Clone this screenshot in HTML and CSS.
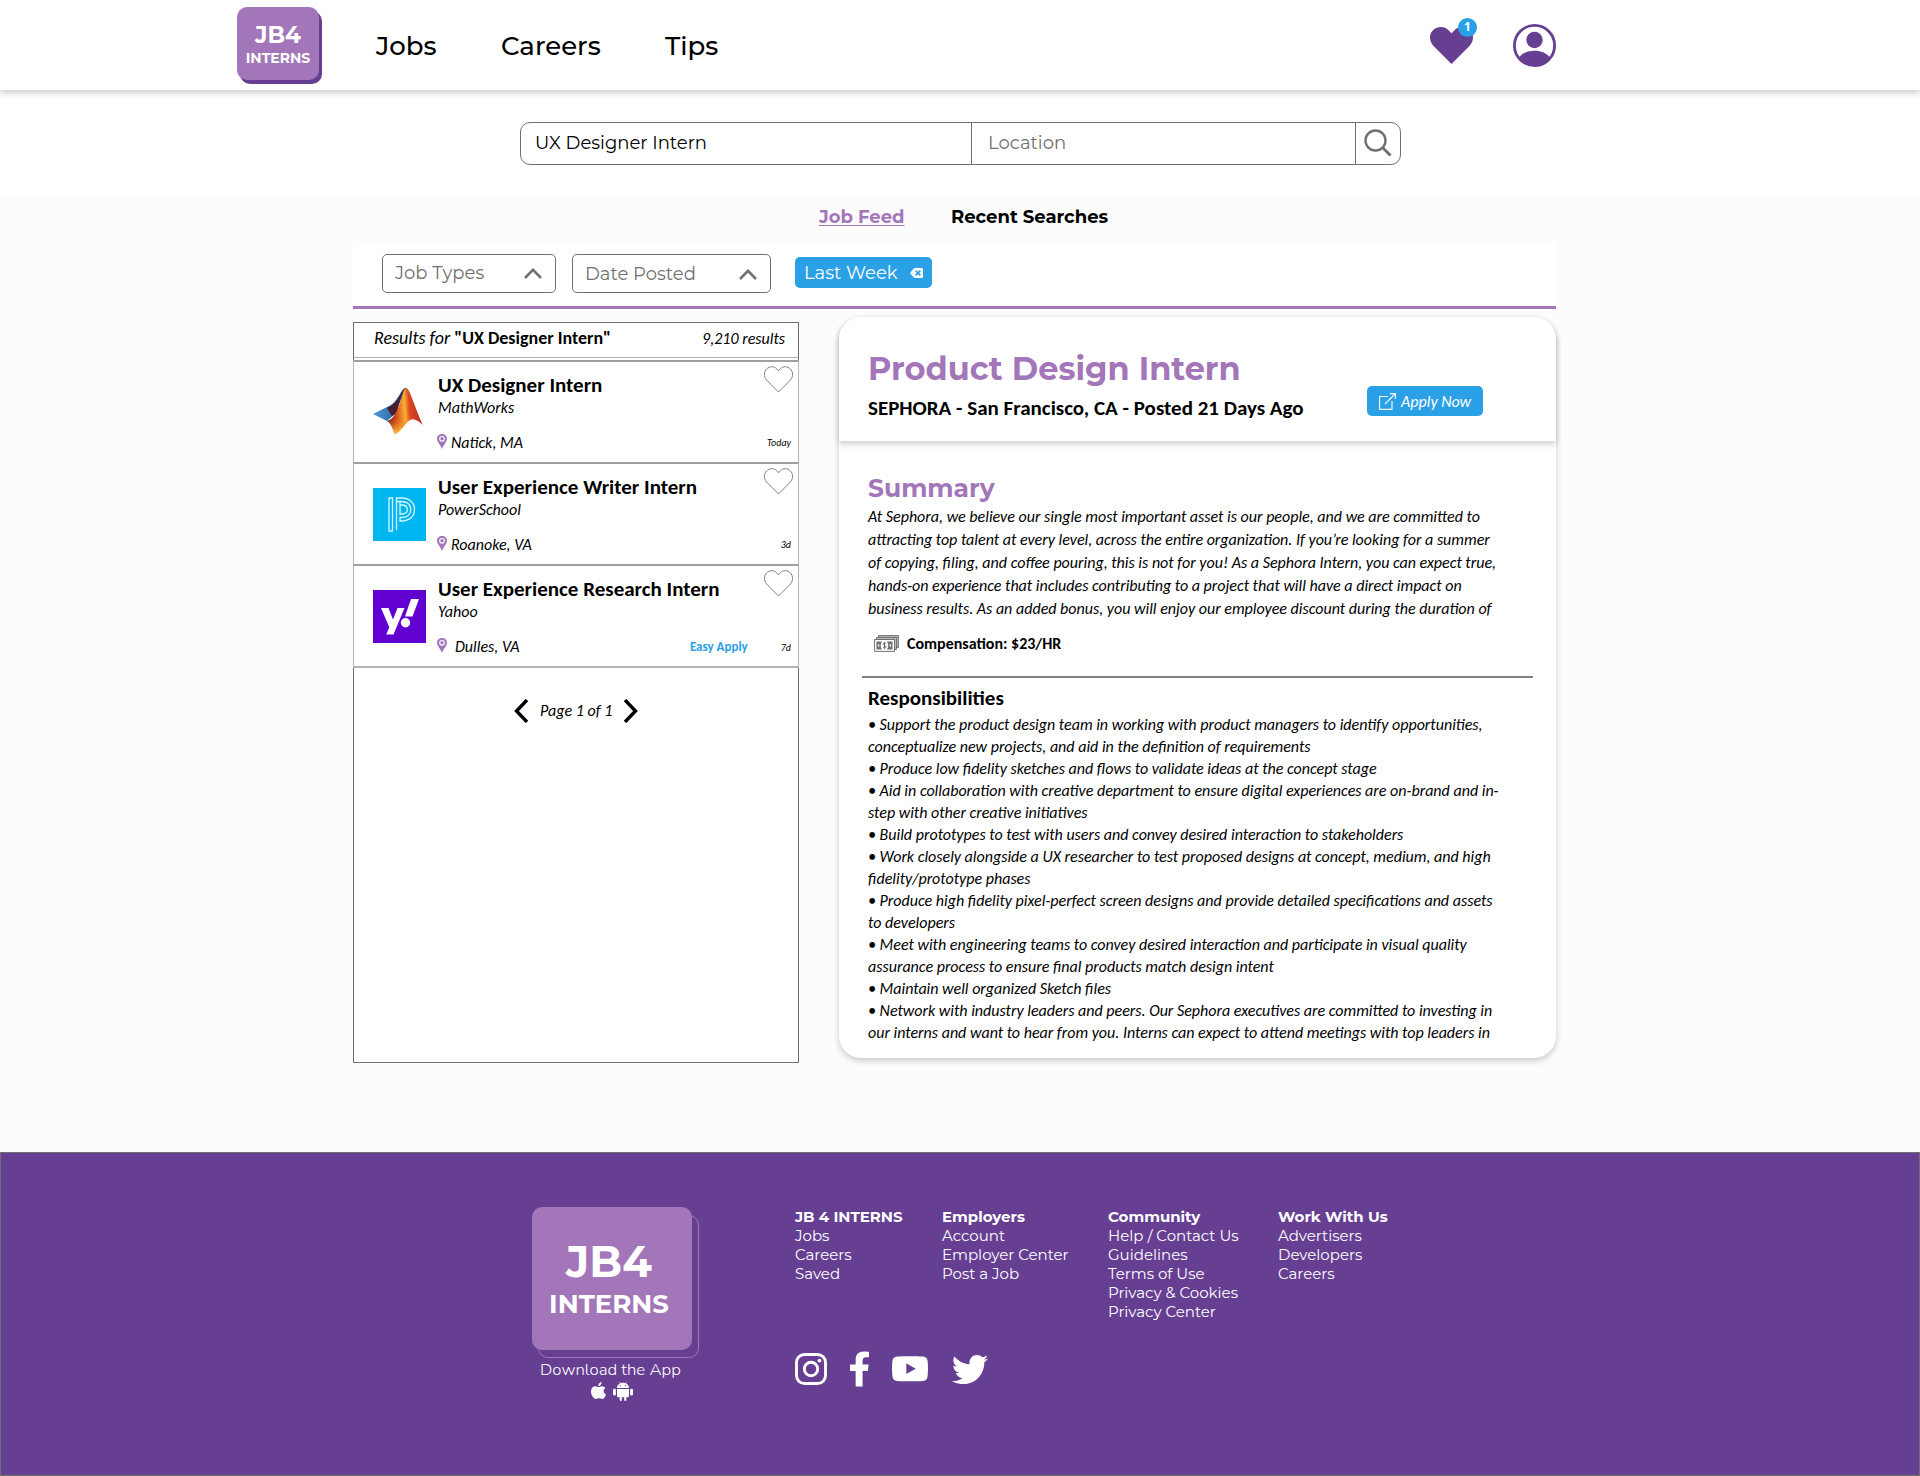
FILE: index.html
```html
<!DOCTYPE html>
<html lang="en">
<head>
<meta charset="utf-8">
<title>JB4 Interns</title>
<link rel="stylesheet" href="styles.css">
</head>
<body>
<header class="topbar">
  <a class="logo"><span class="logo-main">JB4</span><span class="logo-sub">INTERNS</span></a>
  <nav class="nav"><a>Jobs</a><a>Careers</a><a>Tips</a></nav>
  <div class="actions">
    <div class="saved">
      <svg width="43" height="37" viewBox="0 0 43 37"><path fill="#663f93" d="M21.500 37L3.500 19C-1.200 14-1 7 3 3.200C7.500-1 14.500-1 18.500 3.200L21.500 6.200L24.500 3.200C28.500-1 35.500-1 40 3.200C44 7 44.200 14 39.500 19Z"/></svg>
      <span class="badge">1</span>
    </div>
    <svg width="43" height="43" viewBox="0 0 43 43"><defs><clipPath id="face"><circle cx="21.500" cy="21.500" r="20.500"/></clipPath></defs><circle cx="21.500" cy="21.500" r="20.100" fill="none" stroke="#663f93" stroke-width="2.800"/><circle cx="21.500" cy="16" r="8.200" fill="#663f93"/><path clip-path="url(#face)" d="M5 34.500C9 29 15 26.700 21.500 26.700S34 29 38 34.500V43H5Z" fill="#663f93"/></svg>
  </div>
</header>

<section class="search-area">
  <div class="search">
    <div class="field what"><span>UX Designer Intern</span></div>
    <div class="field where"><span>Location</span></div>
    <div class="go"><svg width="28" height="28" viewBox="0 0 28 28" fill="none" stroke="#707070"><circle cx="11.500" cy="11.500" r="10" stroke-width="2.400"/><path d="M18.800 18.800L26.500 26.500" stroke-width="2.800"/></svg></div>
  </div>
</section>

<main class="page">
  <div class="tabs"><a class="tab active">Job Feed</a><a class="tab">Recent Searches</a></div>
  <div class="filters">
    <div class="select types"><span>Job Types</span><svg width="18" height="11" viewBox="0 0 18 11" fill="none" stroke="#707070" stroke-width="2.600"><path d="M1 10L9 1.800L17 10"/></svg></div>
    <div class="select date"><span>Date Posted</span><svg width="18" height="11" viewBox="0 0 18 11" fill="none" stroke="#707070" stroke-width="2.600"><path d="M1 10L9 1.800L17 10"/></svg></div>
    <div class="chip"><span>Last Week</span><svg width="13" height="10" viewBox="0 0 13 10"><path fill="#fff" d="M0 5L3.500 0.800Q4.200 0 5.200 0H12Q13 0 13 1V9Q13 10 12 10H5.200Q4.200 10 3.500 9.200Z"/><path d="M5.700 2.600L10.300 7.400M10.300 2.600L5.700 7.400" stroke="#2aa0e6" stroke-width="1.700"/></svg></div>
  </div>

  <div class="columns">
    <section class="results">
      <div class="results-head"><span><i>Results for</i> <b>"UX Designer Intern"</b></span><i class="count">9,210 results</i></div>
      <article class="job">
        <svg class="brand" width="53" height="53" viewBox="0 0 53 53"><defs><linearGradient id="ml1" x1="0" x2="1"><stop offset="0" stop-color="#4d9bd6"/><stop offset=".6" stop-color="#2f6fa8"/><stop offset="1" stop-color="#3a1a35"/></linearGradient><linearGradient id="ml2" x1="0" x2="1" y1=".3" y2=".2"><stop offset="0" stop-color="#6d1a1c"/><stop offset=".25" stop-color="#d9531e"/><stop offset=".48" stop-color="#fbb034"/><stop offset=".6" stop-color="#dd4a1f"/><stop offset="1" stop-color="#b3232a"/></linearGradient><linearGradient id="ml3" x1="0" x2="0" y1="0" y2="1"><stop offset=".55" stop-color="#f58220" stop-opacity="0"/><stop offset="1" stop-color="#ffc93c"/></linearGradient></defs><path fill="url(#ml1)" d="M0 28L14 21C20 19 24 13 27 8C30 3 31 2 33 2L22 28L14 35Z"/><path fill="#4d1a2c" d="M14 22C20 19 24 16 28 8L24 27L19 30Z"/><path fill="url(#ml2)" d="M14 35C20 34 24 26 28 14C30 7 31 2 33.500 2C37 3 43 25 50 39C44 34 41 32 37 34C32 37 28 46 21.500 48C20 43 18 37 14 35Z"/><path fill="url(#ml3)" d="M14 35C20 34 24 26 28 14L36 12L38 33C32 37 28 46 21.500 48C20 43 18 37 14 35Z"/></svg>
        <div class="job-text"><h3>UX Designer Intern</h3><p>MathWorks</p><div class="place"><svg width="10" height="15" viewBox="0 0 10 15"><path fill="#a376b9" d="M5 0C7.800 0 10 2 10 4.800C10 8 7 10 5 15C3 10 0 8 0 4.800C0 2 2.200 0 5 0Z"/><circle cx="5" cy="4.800" r="2.300" fill="none" stroke="#fff" stroke-width="1.100"/></svg><span>Natick, MA</span></div></div>
        <div class="job-side"><svg width="29" height="27" viewBox="0 0 29 27"><path fill="none" stroke="#808080" d="M14.500 26L2.600 14C-.6 10.300 0 5.600 2.600 3C5.600 0 10 0 12.600 2.700L14.500 4.800L16.400 2.700C19 0 23.400 0 26.400 3C29 5.600 29.600 10.300 26.400 14Z"/></svg><div class="meta"><span class="age">Today</span></div></div>
      </article>
      <article class="job">
        <svg class="brand" width="53" height="53" viewBox="0 0 53 53"><path fill="#00b6f1" d="M0 0H53V53H0Z"/><g fill="none" stroke="#d9f4ff" stroke-width="1.300"><path d="M16 43V10H19.500V43Z M23.500 42V10H28C37 10 41.500 15 41.500 21.500S37 33 28 33H27V29.500H28C34 29.500 37.800 26.500 37.800 21.500S34 13.500 28 13.500H23.500"/><path d="M27 13.500V26H28.500C32 26 34.300 24.500 34.300 21.500S32 17 28.500 17H27"/></g></svg>
        <div class="job-text"><h3>User Experience Writer Intern</h3><p>PowerSchool</p><div class="place"><svg width="10" height="15" viewBox="0 0 10 15"><path fill="#a376b9" d="M5 0C7.800 0 10 2 10 4.800C10 8 7 10 5 15C3 10 0 8 0 4.800C0 2 2.200 0 5 0Z"/><circle cx="5" cy="4.800" r="2.300" fill="none" stroke="#fff" stroke-width="1.100"/></svg><span>Roanoke, VA</span></div></div>
        <div class="job-side"><svg width="29" height="27" viewBox="0 0 29 27"><path fill="none" stroke="#808080" d="M14.500 26L2.600 14C-.6 10.300 0 5.600 2.600 3C5.600 0 10 0 12.600 2.700L14.500 4.800L16.400 2.700C19 0 23.400 0 26.400 3C29 5.600 29.600 10.300 26.400 14Z"/></svg><div class="meta"><span class="age">3d</span></div></div>
      </article>
      <article class="job">
        <svg class="brand" width="53" height="53" viewBox="0 0 53 53"><path fill="#6001d2" d="M0 0H53V53H0Z"/><path fill="#fff" d="M8 18H15.500L20 29.500L24.500 18H31.500L20.500 44.500H13.200L16.300 37.300Z M38 9H46L39.500 26.500H32Z"/><circle cx="32.500" cy="32.700" r="4.700" fill="#fff"/></svg>
        <div class="job-text"><h3>User Experience Research Intern</h3><p>Yahoo</p><div class="place wide"><svg width="10" height="15" viewBox="0 0 10 15"><path fill="#a376b9" d="M5 0C7.800 0 10 2 10 4.800C10 8 7 10 5 15C3 10 0 8 0 4.800C0 2 2.200 0 5 0Z"/><circle cx="5" cy="4.800" r="2.300" fill="none" stroke="#fff" stroke-width="1.100"/></svg><span>Dulles, VA</span></div></div>
        <div class="job-side"><svg width="29" height="27" viewBox="0 0 29 27"><path fill="none" stroke="#808080" d="M14.500 26L2.600 14C-.6 10.300 0 5.600 2.600 3C5.600 0 10 0 12.600 2.700L14.500 4.800L16.400 2.700C19 0 23.400 0 26.400 3C29 5.600 29.600 10.300 26.400 14Z"/></svg><div class="meta"><span class="easy">Easy Apply</span><span class="age">7d</span></div></div>
      </article>
      <div class="pager"><svg width="14" height="24" viewBox="0 0 14 24" fill="none" stroke="#000" stroke-width="3.400"><path d="M13 1L2.500 12L13 23"/></svg><i>Page 1 of 1</i><svg width="14" height="24" viewBox="0 0 14 24" fill="none" stroke="#000" stroke-width="3.400"><path d="M1 1L11.500 12L1 23"/></svg></div>
    </section>

    <section class="detail">
      <div class="detail-head">
        <div><h1>Product Design Intern</h1><h2>SEPHORA - San Francisco, CA - Posted 21 Days Ago</h2></div>
        <a class="apply"><svg width="17" height="17" viewBox="0 0 17 17" fill="none" stroke="#fff" stroke-width="1.100"><path d="M9 3.500H.600V16.400H13V8M6 11L16 1M11 .600H16.400V6"/></svg><span>Apply Now</span></a>
      </div>
      <div class="detail-body">
        <h4>Summary</h4>
        <p class="summary"><span>At Sephora, we believe our single most important asset is our people, and we are committed to</span><span>attracting top talent at every level, across the entire organization. If you’re looking for a summer</span><span>of copying, filing, and coffee pouring, this is not for you! As a Sephora Intern, you can expect true,</span><span>hands-on experience that includes contributing to a project that will have a direct impact on</span><span>business results. As an added bonus, you will enjoy our employee discount during the duration of</span></p>
        <div class="pay"><svg width="25" height="17" viewBox="0 0 25 17" fill="none" stroke="#707070"><path fill="#bbb" d="M4.500 2.500V.600H24.400V12.500H22.500V2.500ZM2.500 4.500V2.500H22.500V14.500H20.500V4.500Z"/><path d="M.600 4.500H20.500V16.400H.600Z"/><path fill="#707070" stroke="none" d="M2.500 6.500H8Q5.500 10.500 8 14.500H2.500ZM18.500 6.500H13Q15.500 10.500 13 14.500H18.500Z"/><path d="M12 8.400C10.500 7.500 9 8 9 9.100S12 10.500 12 11.700S10 13.400 9 12.500M10.500 7V14.200"/><path stroke="#fff" d="M4.700 9V12M16.300 9V12"/></svg><b>Compensation: $23/HR</b></div>
        <hr>
        <h5>Responsibilities</h5>
        <p class="duties"><span>• Support the product design team in working with product managers to identify opportunities,</span><span>conceptualize new projects, and aid in the definition of requirements</span><span>• Produce low fidelity sketches and flows to validate ideas at the concept stage</span><span>• Aid in collaboration with creative department to ensure digital experiences are on-brand and in-</span><span>step with other creative initiatives</span><span>• Build prototypes to test with users and convey desired interaction to stakeholders</span><span>• Work closely alongside a UX researcher to test proposed designs at concept, medium, and high</span><span>fidelity/prototype phases</span><span>• Produce high fidelity pixel-perfect screen designs and provide detailed specifications and assets</span><span>to developers</span><span>• Meet with engineering teams to convey desired interaction and participate in visual quality</span><span>assurance process to ensure final products match design intent</span><span>• Maintain well organized Sketch files</span><span>• Network with industry leaders and peers. Our Sephora executives are committed to investing in</span><span>our interns and want to hear from you. Interns can expect to attend meetings with top leaders in</span></p>
      </div>
    </section>
  </div>
</main>

<footer class="footer">
  <div class="app">
    <div class="big-logo"><span class="big-main">JB4</span><span class="big-sub">INTERNS</span></div>
    <p class="download">Download the App</p>
    <div class="stores"><svg width="15" height="18" viewBox="0 0 15 18" fill="#fff"><path d="M10.600 0C10.800 1.900 9.300 4 7.200 4.100C7 2.200 8.600 .300 10.600 0Z"/><path d="M7.400 5.200C8.300 5.200 9.300 4.200 11 4.200C12.300 4.200 13.600 4.900 14.400 6C11.800 7.500 12.200 11.300 15 12.400C14.200 14.600 12.700 17 11.200 17C10 17 9.500 16.300 8 16.300S6 17 4.900 17C2.800 17 0 13 0 9.500C0 6.100 2.100 4.300 4.200 4.300C5.700 4.300 6.600 5.200 7.400 5.200Z"/></svg><svg width="20" height="19" viewBox="0 0 20 19" fill="#fff"><path d="M4 6C4 3.500 5.500 2.200 7 1.500L6 .200L6.500 0L7.500 1.200C9 .700 11 .700 12.500 1.200L13.500 0L14 .200L13 1.500C14.500 2.200 16 3.500 16 6ZM4 7H16V14C16 15 15.500 15.300 14.500 15.300H13.300V17.800Q13.300 19 12.200 19T11.200 17.800V15.300H8.800V17.800Q8.800 19 7.800 19T6.700 17.800V15.300H5.500C4.500 15.300 4 15 4 14ZM0 8Q0 6.800 1.400 6.800T2.900 8V12.500Q2.900 13.500 1.500 13.500T0 12.500ZM17.100 8Q17.100 6.800 18.600 6.800T20 8V12.500Q20 13.500 18.600 13.500T17.100 12.500Z"/><path fill="#663f93" d="M6.800 3.300H7.900V4.300H6.800ZM12.100 3.300H13.200V4.300H12.100Z"/></svg></div>
  </div>
  <div class="links">
    <div class="link-grid">
      <ul><li class="head">JB 4 INTERNS</li><li>Jobs</li><li>Careers</li><li>Saved</li></ul>
      <ul><li class="head">Employers</li><li>Account</li><li>Employer Center</li><li>Post a Job</li></ul>
      <ul><li class="head">Community</li><li>Help / Contact Us</li><li>Guidelines</li><li>Terms of Use</li><li>Privacy &amp; Cookies</li><li>Privacy Center</li></ul>
      <ul><li class="head">Work With Us</li><li>Advertisers</li><li>Developers</li><li>Careers</li></ul>
    </div>
    <div class="social">
      <svg width="32" height="32" viewBox="0 0 32 32" fill="none" stroke="#fff" stroke-width="2.900"><rect x="1.500" y="1.500" width="29" height="29" rx="8"/><circle cx="16" cy="16" r="6.700"/><circle cx="24.500" cy="7.600" r="1.900" fill="#fff" stroke="none"/></svg>
      <svg width="19" height="36" viewBox="0 0 19.500 36" fill="#fff"><path d="M5.800 36V20H0V13.500H5.800V8.500C5.800 2.900 9.100 0 14.200 0C16.600 0 19.500 .400 19.500 .400V6H16.600C13.800 6 12.900 7.700 12.900 9.500V13.500H19.200L18.200 20H12.900V36Z"/></svg>
      <svg width="36" height="26" viewBox="0 0 36 26"><path fill="#fff" fill-rule="evenodd" d="M5 .600C12 0 24 0 31 .600C34 .900 35.300 2.500 35.600 5C36.100 10 36.100 15 35.600 20C35.300 23 34 24.600 31 24.900C24 25.500 12 25.500 5 24.900C2 24.600 .700 23 .400 20C-.100 15-.100 10 .400 5C.700 2.500 2 .900 5 .600ZM14.300 7.300V18L23.700 12.700Z"/></svg>
      <svg class="bird" width="36" height="29" viewBox="0 0 36 29"><path fill="#fff" d="M32.300 7.300C32.700 18 24.500 29.200 11.300 29.200C7.200 29.200 3.300 28 0 26C3.900 26.400 7.700 25.300 10.700 23C7.600 22.900 4.900 20.900 3.900 17.900C5 18.100 6.200 18 7.200 17.800C3.800 17.100 1.300 14.100 1.300 10.500C2.300 11 3.400 11.400 4.600 11.400C1.400 9.300 .400 5 2.400 1.600C6 6 11.400 9 17.600 9.300C16.500 4.600 20.100 0 25 0C27.100 0 29.100 .900 30.400 2.300C32.100 2 33.700 1.400 35.100 .500C34.500 2.300 33.400 3.700 31.800 4.600C33.300 4.400 34.700 4 36 3.500C35 5 33.700 6.200 32.300 7.300Z"/></svg>
    </div>
  </div>
</footer>
</body>
</html>
```
FILE: styles.css
```css
* { box-sizing: border-box; margin: 0; padding: 0; }
body { width: 1920px; background: #fcfcfc; color: #000; font-family: Montserrat, Inter, sans-serif; }
svg { display: block; flex: none; }
ul { list-style: none; }
a, span, b, i, h1, h2, h3, h4, h5, p, li { white-space: nowrap; }

.topbar { position: relative; display: flex; height: 90px; padding: 0 364px 0 237px; background: #fff; box-shadow: 0 3px 6px rgba(0, 0, 0, .2); }
.logo { display: flex; flex-direction: column; align-items: center; width: 82px; height: 73px; margin-top: 7px; padding-top: 14px; border-radius: 10px; background: #a376b9; box-shadow: 3px 4px 0 #663f93; color: #fff; font-weight: 700; }
.logo-main { font-size: 23px; line-height: 28px; }
.logo-sub { font-size: 14px; line-height: 18px; }
.nav { display: grid; grid-template-columns: 125px 164px auto; margin-left: 57px; padding-top: 2px; font-size: 26px; font-weight: 500; line-height: 88px; }
.actions { display: flex; gap: 40px; margin-left: auto; padding-top: 24px; }
.saved { position: relative; height: 40px; padding-top: 3px; }
.badge { position: absolute; left: 28px; top: -6px; width: 19px; height: 19px; border-radius: 50%; background: #2aa0e6; color: #fff; font: 700 12px/18px "Open Sans", sans-serif; text-align: center; }

.search-area { display: flex; justify-content: center; height: 104px; padding-top: 32px; background: #fff; }
.search { display: flex; width: 881px; height: 43px; border: 1px solid #707070; border-radius: 10px; font-size: 18px; line-height: 41px; background: #fff; }
.what { width: 450px; padding-left: 14.500px; }
.where { width: 384px; padding-left: 16.500px; border-left: 1px solid #707070; color: #707070; }
.go { flex: 1; padding: 6px 0 0 8px; border-left: 1px solid #707070; }

.page { height: 958px; }
.tabs { display: flex; gap: 46.500px; height: 48px; padding-left: 819px; font-size: 18px; font-weight: 700; line-height: 46px; }
.active { color: #a376b9; text-decoration: underline; text-decoration-thickness: 1px; text-underline-offset: 2px; }
.filters { display: flex; width: 1203px; height: 67px; margin-left: 353px; padding: 12px 0 0 29px; border-bottom: 3px solid #a376b9; background: #fff; }
.select { display: flex; align-items: center; justify-content: space-between; height: 39px; padding: 0 13px 0 12px; border: 1px solid #707070; border-radius: 5px; color: #707070; font-size: 18px; }
.types { width: 174px; padding-bottom: 1px; }
.date { width: 199px; margin-left: 16px; padding-top: 1px; }
.chip { display: flex; align-items: center; justify-content: space-between; width: 137px; height: 31px; margin: 3px 0 0 24px; padding: 0 9px; border-radius: 5px; background: #2aa0e6; color: #fff; font-size: 18px; }

.columns { display: flex; gap: 40px; margin-left: 353px; padding-top: 8px; font-family: Carlito, Lato, sans-serif; }
.results { width: 446px; height: 741px; margin-top: 5px; border: 1px solid #707070; background: #fff; }
.results-head { display: flex; justify-content: space-between; height: 35px; margin-bottom: 2px; padding: 0 13px 0 20px; border-bottom: 1px solid #b5b5b5; font-size: 18px; line-height: 31px; }
.count { font-size: 16px; line-height: 32px; }
.job { display: flex; height: 102px; margin: 0 -1px; padding: 0 5px 0 19px; border-top: 2px solid #a0a0a0; border-left: 1px solid #b5b5b5; border-right: 1px solid #b5b5b5; }
.job:nth-of-type(3) { height: 104px; border-bottom: 2px solid #b5b5b5; }
.brand { margin-top: 24px; }
.job-text { margin-left: 12px; padding-top: 11px; }
.job h3 { font-size: 21px; line-height: 25px; }
.job p { font-size: 16px; font-style: italic; line-height: 20px; }
.place { display: flex; gap: 4px; margin: 16px 0 0 -1px; font-size: 16px; font-style: italic; line-height: 17px; }
.wide { gap: 8px; }
.job-side { width: 29px; margin-left: auto; padding-top: 4px; }
.meta { display: flex; justify-content: flex-end; gap: 33px; align-items: baseline; margin: 40px 2px 0 0; line-height: 20px; }
.age { font-size: 10px; font-style: italic; }
.easy { color: #2aa0e6; font-size: 13px; font-weight: 700; }
.pager { display: flex; align-items: center; gap: 12px; margin: 31px 0 0 160px; font-size: 16px; line-height: 24px; }

.detail { width: 717px; height: 741px; border-radius: 22px; background: #fff; box-shadow: 0 3px 6px rgba(0, 0, 0, .2); }
.detail-head { display: flex; justify-content: space-between; height: 124px; padding: 30px 73px 0 29px; border-radius: 22px 22px 0 0; background: #fff; box-shadow: 0 3px 6px rgba(0, 0, 0, .2); }
h1 { color: #a376b9; font: 700 32px/44px Montserrat, sans-serif; }
h2 { margin-top: 2px; font-size: 21px; line-height: 30px; }
.apply { display: flex; align-items: center; gap: 5px; width: 116px; height: 30px; margin-top: 39px; padding-left: 12px; border-radius: 5px; background: #2aa0e6; color: #fff; font-size: 16px; font-style: italic; }
.detail-body { padding: 31px 23px 0 29px; }
h4 { color: #a376b9; font: 700 25px/32px Montserrat, sans-serif; }
.summary { margin-top: 1px; font-size: 16px; font-style: italic; line-height: 23px; }
.summary span, .duties span { display: block; width: max-content; }
.pay { display: flex; align-items: center; gap: 8px; height: 20px; margin: 13px 0 0 6px; font-size: 16px; }
hr { height: 2px; margin: 23px 0 0 -6px; border: 0; background: #808080; }
h5 { margin-top: 7px; font-size: 21px; line-height: 26px; }
.duties { margin-top: 3px; font-size: 16px; font-style: italic; line-height: 22px; }

.footer { display: flex; height: 324px; padding: 54px 0 0 531px; border: 1px solid #707070; background: #663f93; color: #fff; }
.app { width: 160px; isolation: isolate; }
.big-logo { position: relative; display: flex; flex-direction: column; align-items: center; height: 143px; padding: 30px 6px 0 0; border-radius: 10px; background: #a376b9; font-weight: 700; }
.big-logo::before { content: ""; position: absolute; z-index: -1; left: 6px; top: 8px; width: 159px; height: 141px; border: 1px solid #a376b9; border-radius: 10px; }
.big-main { font-size: 43px; line-height: 50px; }
.big-sub { font-size: 26px; line-height: 34px; }
.download { margin: 8px 0 0 8px; font-family: Nunito, sans-serif; font-size: 16.800px; font-weight: 300; line-height: 24px; }
.stores { display: flex; gap: 7px; margin: 0 0 0 59px; }
.links { margin-left: 103px; }
.link-grid { display: grid; grid-template-columns: 147px 166px 170px auto; height: 144px; font-size: 15px; line-height: 19px; }
.head { font-weight: 700; }
.social { display: flex; align-items: center; gap: 23px; height: 36px; }
.bird { margin-left: 1px; }
```
